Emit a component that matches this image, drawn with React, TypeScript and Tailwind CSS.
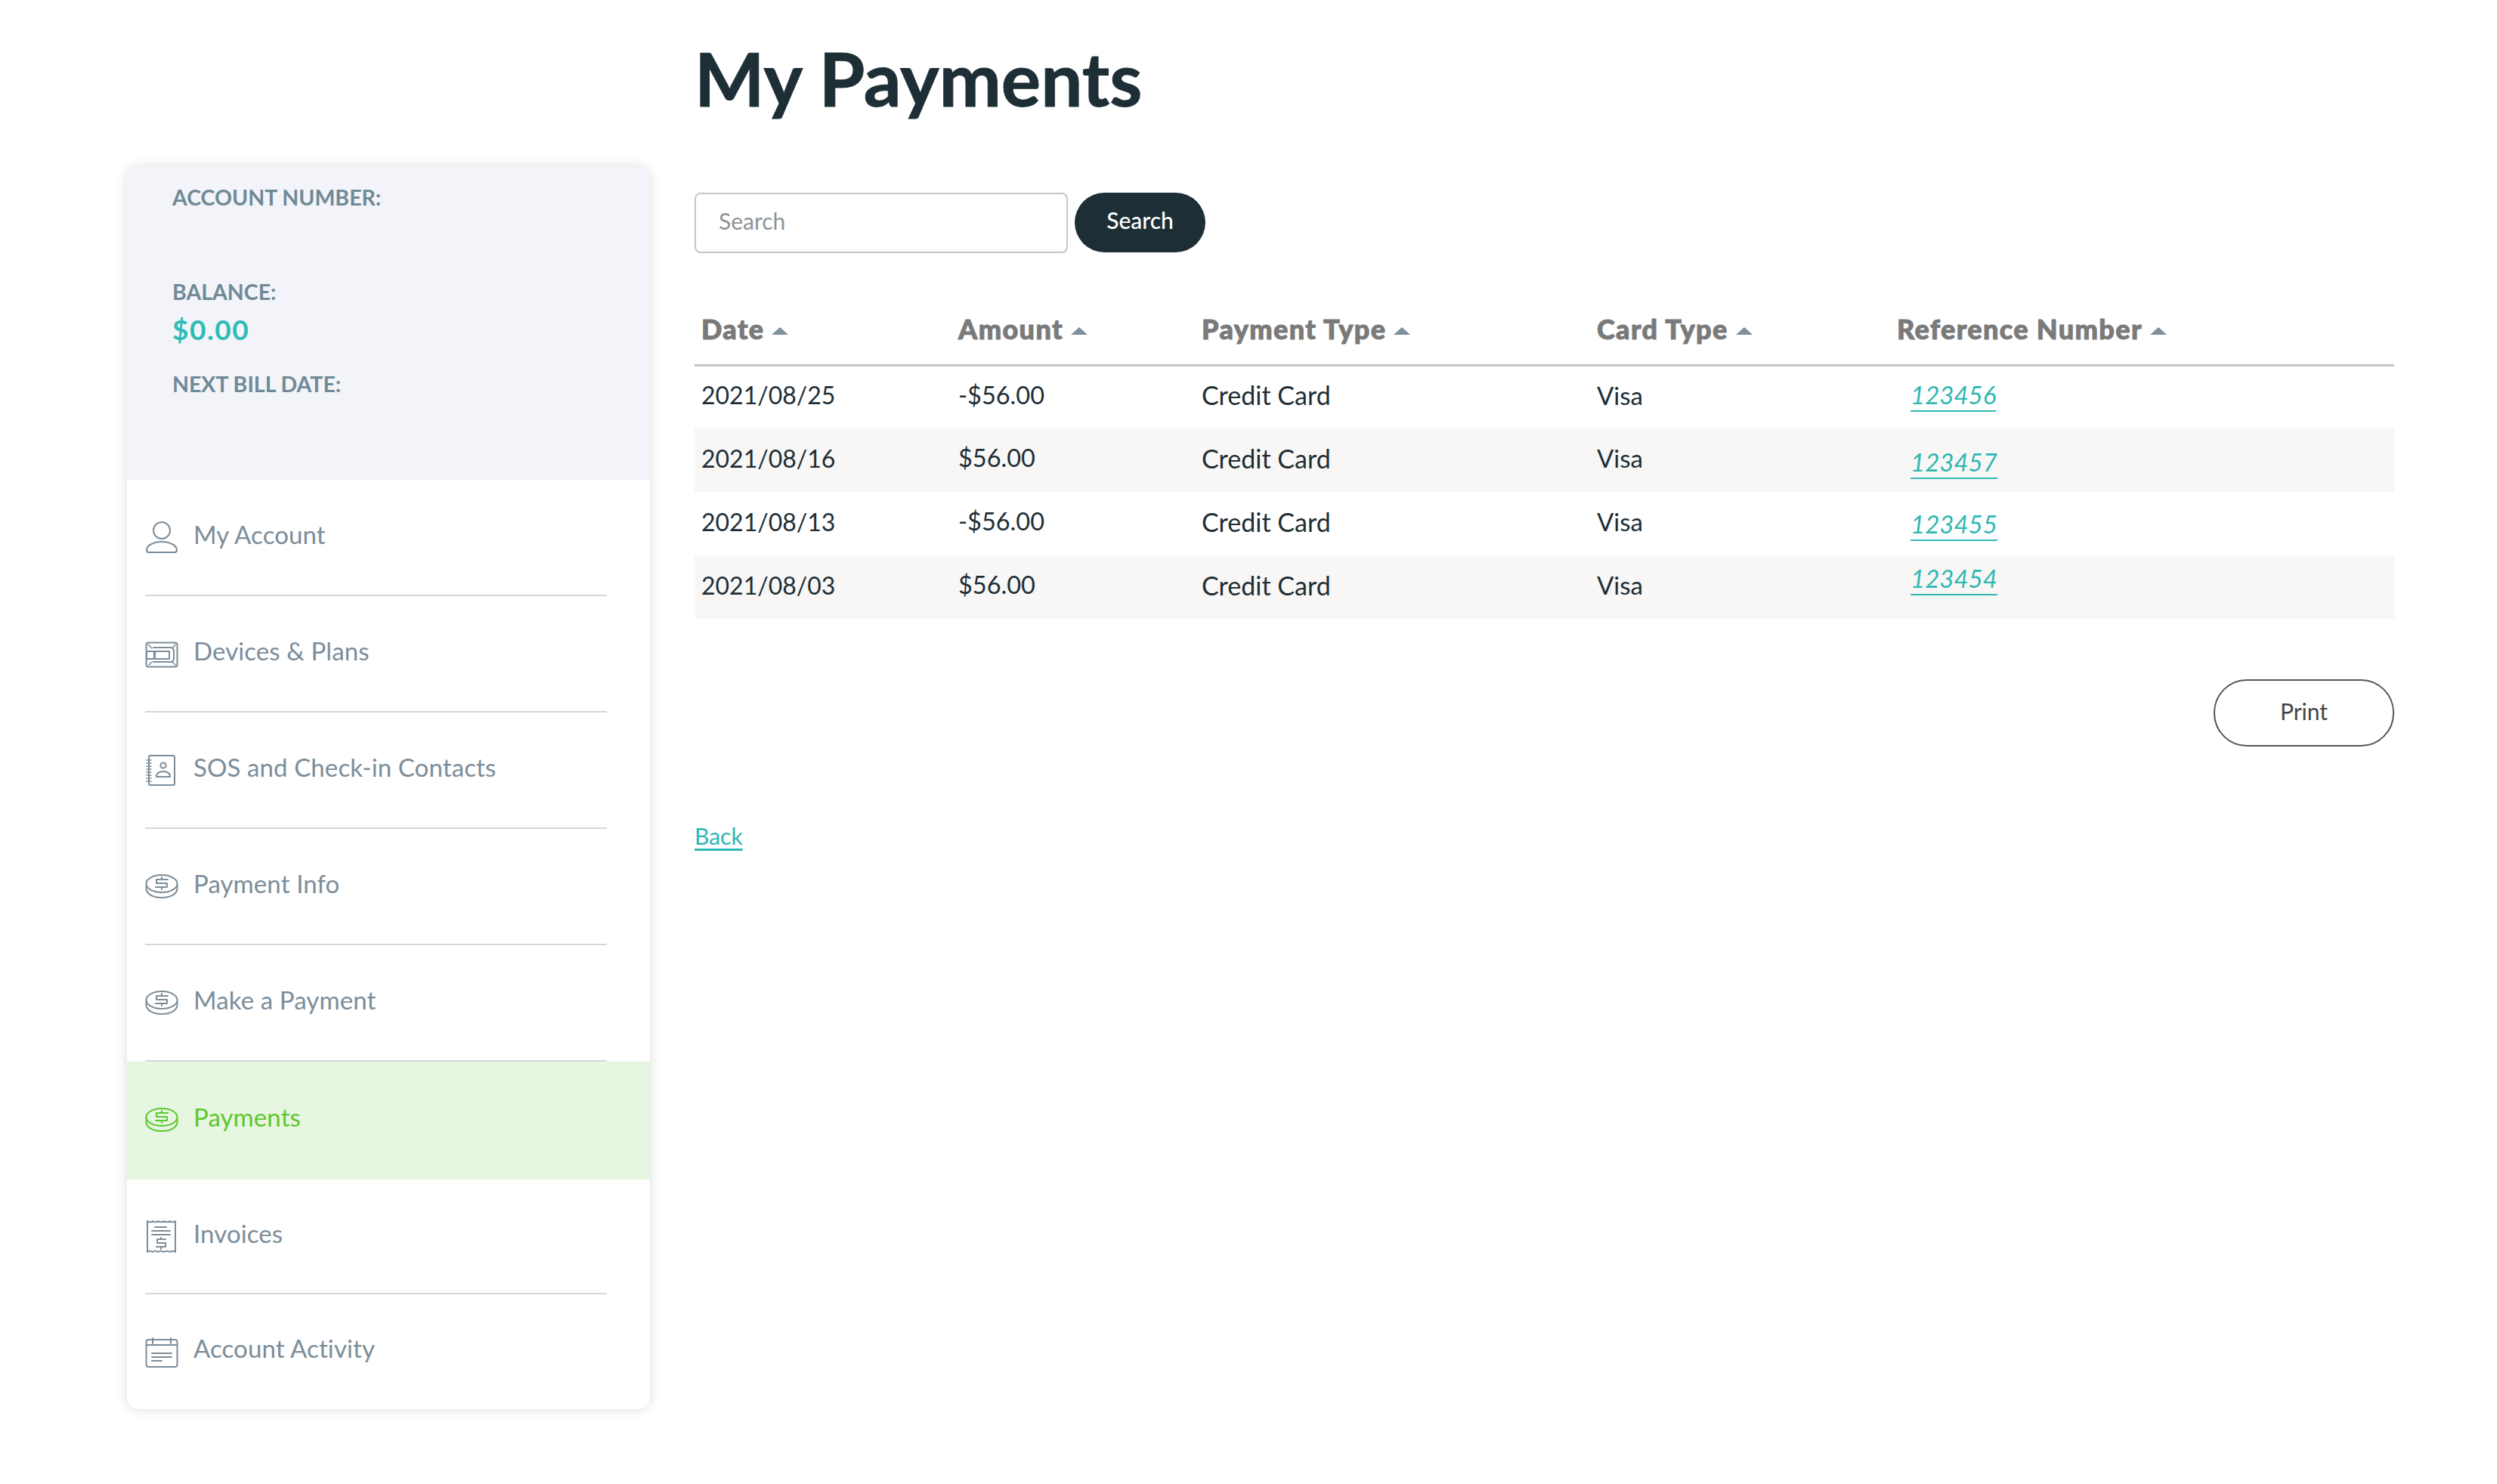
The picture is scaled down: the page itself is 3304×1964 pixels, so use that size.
import type { ReactNode } from 'react';

function Icon({ children }: { children: ReactNode }) {
  return (
    <svg width="44" height="44" viewBox="0 0 44 44" fill="none" stroke="currentColor" strokeWidth="2" strokeLinecap="round" strokeLinejoin="round" className="shrink-0 overflow-visible">
      {children}
    </svg>
  );
}

const PersonIcon = () => (
  <Icon>
    <circle cx="22" cy="13" r="11" />
    <path d="M2 39c0-6 9-11 20-11s20 5 20 11c0 2-1 3-3 3H5c-2 0-3-1-3-3z" />
  </Icon>
);

const DeviceIcon = () => (
  <Icon>
    <rect x="1.5" y="7.5" width="41" height="32" rx="3" />
    <path d="M11 14h23c2 0 4 2 4 4v11c0 2-2 4-4 4H11" />
    <rect x="2" y="19" width="10" height="10" />
    <rect x="13" y="19" width="19" height="10" />
    <path d="M4 10l5 5M40 10l-4 5M5 37l4-4M40 37l-4-4" strokeWidth="1.6" />
  </Icon>
);

const NotebookIcon = () => (
  <Icon>
    <rect x="5" y="3" width="34" height="39" rx="2" />
    <path d="M2 9h6M2 13h6M2 17h6M2 21h6M2 25h6M2 29h6M2 33h6M2 37h6" strokeWidth="1.6" />
    <circle cx="24" cy="16" r="3.6" />
    <path d="M15 31c0-5 4-7 9-7s9 2 9 7z" />
  </Icon>
);

const CoinIcon = () => (
  <Icon>
    <ellipse cx="22" cy="18.5" rx="20.5" ry="11.5" />
    <path d="M1.5 20v5c0 7 9 12 20.500 12s20.500-5 20.500-12v-5" />
    <path d="M30 13H15v5h14v5H14M22 10v3M22 23v3" />
  </Icon>
);

const ReceiptIcon = () => (
  <Icon>
    <path d="M3 2c3 2 4 2 7 0 3 2 4 2 7 0 3 2 5 2 8 0 3 2 5 2 8 0 3 2 4 2 7 0v41c-3-2-4-2-7 0-3-2-5-2-8 0-3-2-5-2-8 0-3-2-4-2-7 0-3-2-4-2-7 0z" />
    <path d="M13 10h15M9 15h24M9 20h24" />
    <path d="M27 26H16v5h11v5H15M21 24v2M21 36v3" />
  </Icon>
);

const CalendarIcon = () => (
  <Icon>
    <rect x="1.5" y="7" width="41" height="36" rx="3" />
    <path d="M2 14h40M10 5v7M34 5v7M9 25h26M9 30h26M9 35h13" />
  </Icon>
);

const navItems = [
  { label: 'My Account', icon: <PersonIcon />, height: 'h-[154px]' },
  { label: 'Devices & Plans', icon: <DeviceIcon />, height: 'h-[154px]' },
  { label: 'SOS and Check-in Contacts', icon: <NotebookIcon />, height: 'h-[154px]' },
  { label: 'Payment Info', icon: <CoinIcon />, height: 'h-[154px]' },
  { label: 'Make a Payment', icon: <CoinIcon />, height: 'h-[154px]' },
  { label: 'Payments', icon: <CoinIcon />, height: 'h-[156px]', active: true },
  { label: 'Invoices', icon: <ReceiptIcon />, height: 'h-[152px]' },
  { label: 'Account Activity', icon: <CalendarIcon />, height: 'h-[152px]', last: true },
];

const payments = [
  { date: '2021/08/25', amount: '-$56.00', ref: '123456', shift: '-translate-y-[1px]' },
  { date: '2021/08/16', amount: '$56.00', ref: '123457', shift: 'translate-y-[5px]' },
  { date: '2021/08/13', amount: '-$56.00', ref: '123455', shift: 'translate-y-[3px]' },
  { date: '2021/08/03', amount: '$56.00', ref: '123454', shift: '-translate-y-[9px]' },
];

function SortHeader({ label }: { label: string }) {
  return (
    <th className="px-[9px] pb-[14px] text-left align-middle">
      <span className="inline-flex items-center gap-[10px] text-[36px] font-black tracking-[1.4px] text-[#7a7a7a] [-webkit-text-stroke:1px_#7a7a7a]">
        {label}
        <span className="mt-[6px] h-0 w-0 border-x-[11px] border-b-[10px] border-x-transparent border-b-[#7d909c]" />
      </span>
    </th>
  );
}

function Sidebar() {
  return (
    <aside className="ml-[168px] mt-[221px] w-[692px] shrink-0 self-start overflow-hidden rounded-[16px] bg-white shadow-[0_0_16px_rgba(0,0,0,0.14)]">
      <div className="h-[414px] bg-[#f2f4f9] pl-[60px] font-bold text-[#6f8a96]">
        <p className="pt-[20px] text-[28.5px] leading-[40px]">ACCOUNT NUMBER:</p>
        <p className="mt-[85px] text-[28.5px] leading-[40px]">BALANCE:</p>
        <p className="mt-[8px] text-[37px] leading-[44px] tracking-[1.5px] text-[#2fbcb6]">$0.00</p>
        <p className="mt-[30px] text-[28.5px] leading-[40px]">NEXT BILL DATE:</p>
      </div>
      <nav>
        {navItems.map((item) => (
          <div key={item.label} className={`${item.height} ${item.active ? 'bg-[#e7f6e0] text-[#5ec72f]' : 'text-[#7b8d9a]'}`}>
            <div className={`ml-[24px] flex h-full w-[611px] items-center gap-[20px] border-b-[2px] ${item.active || item.last ? 'border-transparent' : 'border-[#d6d6d6]'}`}>
              {item.icon}
              <span className="mb-[7px] text-[33px] tracking-[0.1px]">{item.label}</span>
            </div>
          </div>
        ))}
      </nav>
    </aside>
  );
}

export default function App() {
  return (
    <div className="flex min-h-[1964px] bg-white font-['Lato',sans-serif]">
      <Sidebar />
      <main className="ml-[59px] w-[2249px]">
        <h1 className="mt-[30px] text-[98px] font-bold leading-[146px] text-[#1e2e36] [-webkit-text-stroke:1px_#1e2e36]">My Payments</h1>

        <div className="mt-[79px] flex gap-[9px]">
          <input
            placeholder="Search"
            className="h-[80px] w-[494px] rounded-[8px] border-[2px] border-[#c6c6c6] bg-white px-[30px] pb-[6px] text-[30px] outline-none placeholder:text-[#8c9499]"
          />
          <button className="h-[79px] w-[173px] rounded-[40px] bg-[#1e2e36] pb-[6px] text-[30px] font-medium text-white">Search</button>
        </div>

        <table className="mt-[68px] w-full table-fixed border-collapse">
          <colgroup>
            <col className="w-[340px]" />
            <col className="w-[322px]" />
            <col className="w-[523px]" />
            <col className="w-[397px]" />
            <col />
          </colgroup>
          <thead>
            <tr className="h-[80px] border-b-[3px] border-[#c4c4c4]">
              <SortHeader label="Date" />
              <SortHeader label="Amount" />
              <SortHeader label="Payment Type" />
              <SortHeader label="Card Type" />
              <SortHeader label="Reference Number" />
            </tr>
          </thead>
          <tbody className="text-[33px] text-[#1e2e36]">
            {payments.map((row, i) => (
              <tr key={row.ref} className={`h-[84px] ${i % 2 === 1 ? 'bg-[#f8f7f6]' : ''}`}>
                <td className="px-[9px] pb-[5px] text-[32px]">{row.date}</td>
                <td className="px-[9px] pb-[5px] text-[32.5px]">{row.amount}</td>
                <td className="px-[9px] pb-[6px] text-[34px]">Credit Card</td>
                <td className="px-[9px] pb-[5px]">Visa</td>
                <td className="px-[9px] pb-[5px]">
                  <a href="#" className={`ml-[18px] inline-block italic text-[#2fb8b3] underline decoration-[2px] underline-offset-[8px] ${row.shift}`}>
                    {row.ref}
                  </a>
                </td>
              </tr>
            ))}
          </tbody>
        </table>

        <div className="mt-[80px] flex justify-end">
          <button className="h-[89px] w-[239px] rounded-[44px] border-[2px] border-[#555555] bg-white pb-[4px] text-[30px] text-[#444444]">Print</button>
        </div>

        <a href="#" className="mt-[96px] inline-block text-[30px] text-[#2fb8b3] underline underline-offset-[5px]">Back</a>
      </main>
    </div>
  );
}
